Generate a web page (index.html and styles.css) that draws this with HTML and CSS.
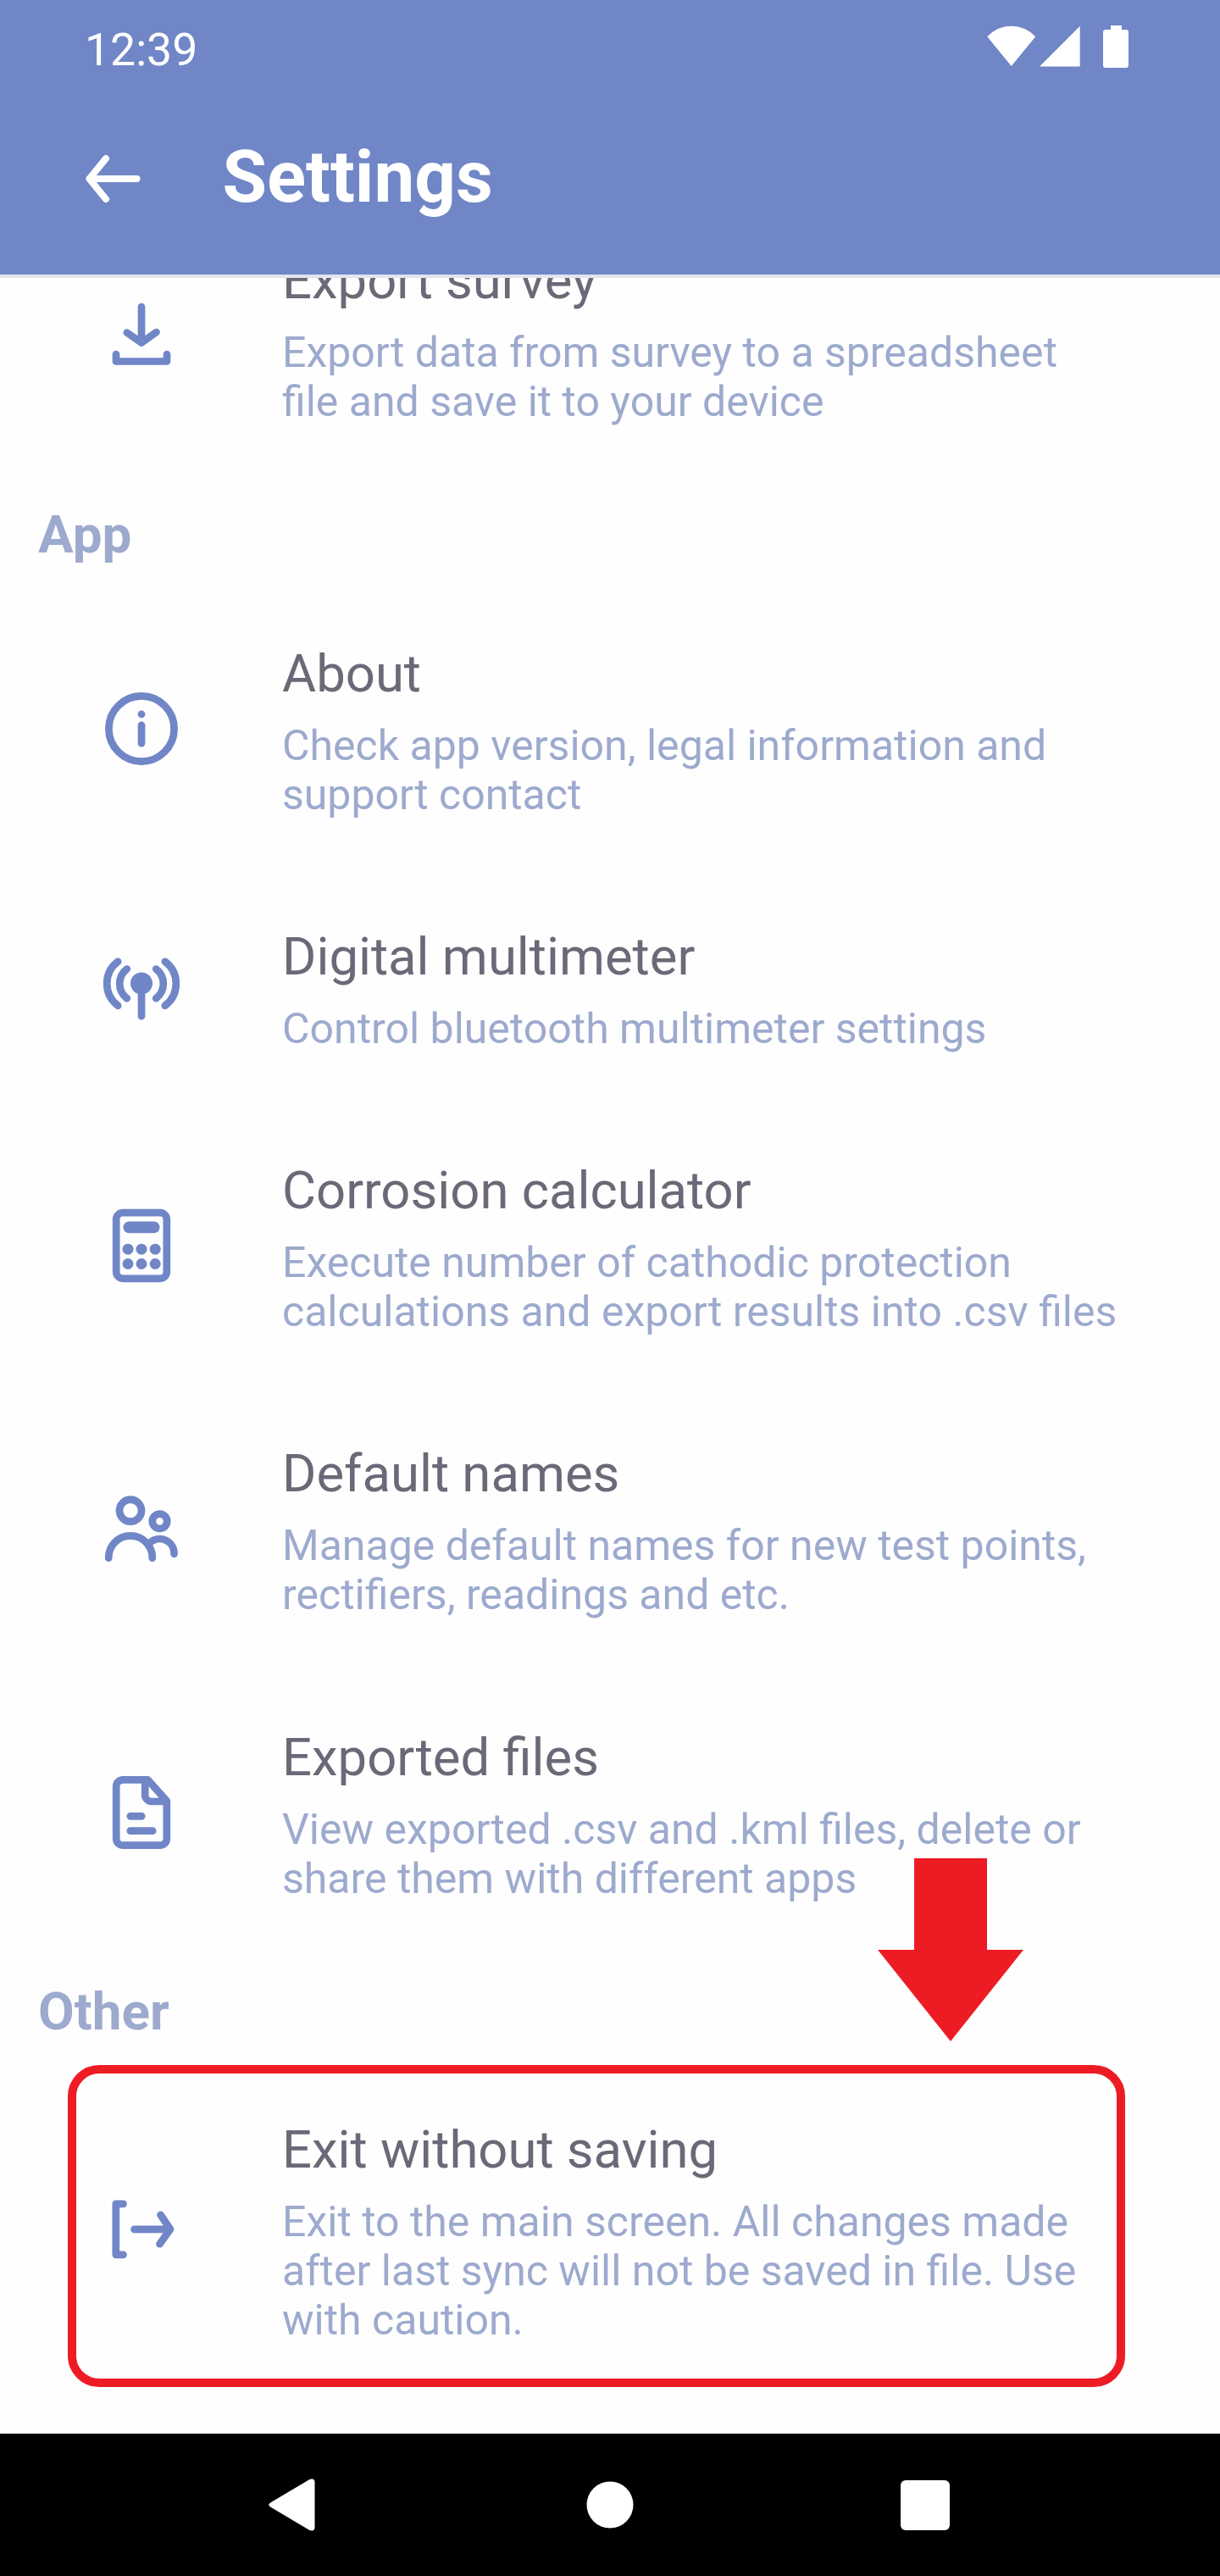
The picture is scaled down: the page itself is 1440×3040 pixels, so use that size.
FILE: index.html
```html
<!DOCTYPE html>
<html lang="en">
<head>
<meta charset="utf-8">
<title>Settings</title>
<link rel="stylesheet" href="styles.css">
</head>
<body>
<div class="screen">
  <header class="header">
    <div class="status-bar">
      <span class="clock">12:39</span>
      <div class="status-icons">
        <svg class="wifi" width="58" height="50" viewBox="0 0 58 50"><path d="M.3 13.3Q12 .8 28.7 .8T57.2 13.3L28.7 48z"/></svg>
        <svg class="signal" width="48" height="50" viewBox="0 0 48 50"><path d="M0 48.5L47.7 .8v47.7z"/></svg>
        <svg class="battery" width="30" height="50" viewBox="0 0 30 50"><path d="M9 0h13v5h5a3 3 0 0 1 3 3v39a3 3 0 0 1-3 3H3a3 3 0 0 1-3-3V8a3 3 0 0 1 3-3h6z"/></svg>
      </div>
    </div>
    <div class="toolbar">
      <svg class="back" width="66" height="58" viewBox="0 0 66 58"><path d="M60.5 29H4.500M24 5L4.500 29l19.500 24"/></svg>
      <h1 class="page-title">Settings</h1>
    </div>
  </header>

  <main class="list">
    <div class="row row-clipped">
      <svg class="icon" viewBox="0 0 104 104"><path d="M52 18v41M34.800 48.500L52 60.500l17.500-12.500M22 74v8.500h60V74"/></svg>
      <div class="text"><div class="title">Export survey</div><div class="desc">Export data from survey to a spreadsheet<br>file and save it to your device</div></div>
    </div>

    <h2 class="section">App</h2>
    <div class="row">
      <svg class="icon" viewBox="0 0 104 104"><circle cx="52" cy="52" r="38.6"/><path d="M52 47.800v21.400"/><circle class="solid" cx="52" cy="34.8" r="4.400"/></svg>
      <div class="text"><div class="title">About</div><div class="desc">Check app version, legal information and<br>support contact</div></div>
    </div>
    <div class="row row-single">
      <svg class="icon" viewBox="0 0 104 104"><circle class="solid" cx="52" cy="47.5" r="13"/><path d="M52 50v36.200M34.800 30.500a21.800 21.800 0 0 0 0 34.700M24.200 21.800a32.500 32.500 0 0 0 0 52M69.200 30.500a21.800 21.800 0 0 1 0 34.700M79.800 21.800a32.500 32.500 0 0 1 0 52"/></svg>
      <div class="text"><div class="title">Digital multimeter</div><div class="desc">Control bluetooth multimeter settings</div></div>
    </div>
    <div class="row">
      <svg class="icon" viewBox="0 0 104 104"><rect x="22.200" y="13.200" width="59.600" height="77.600" rx="7.800"/><g class="solid"><rect x="30.500" y="23.500" width="43" height="13.700" rx="6.800"/><circle cx="36" cy="56.200" r="6.500"/><circle cx="52" cy="56.200" r="6.500"/><circle cx="68.200" cy="56.200" r="6.500"/><circle cx="36" cy="73.500" r="6.500"/><circle cx="52" cy="73.500" r="6.500"/><circle cx="68.200" cy="73.500" r="6.500"/></g></svg>
      <div class="text"><div class="title">Corrosion calculator</div><div class="desc">Execute number of cathodic protection<br>calculations and export results into .csv files</div></div>
    </div>
    <div class="row">
      <svg class="icon" viewBox="0 0 104 104"><circle cx="39" cy="30.700" r="13"/><circle cx="73.500" cy="43.300" r="8.700"/><path d="M13.200 86.700v-.6a25.800 25.800 0 0 1 51.600 0v.6M62 68.600a17 17 0 0 1 28.500 13.100"/></svg>
      <div class="text"><div class="title">Default names</div><div class="desc">Manage default names for new test points,<br>rectifiers, readings and etc.</div></div>
    </div>
    <div class="row">
      <svg class="icon" viewBox="0 0 104 104"><path d="M59.500 13.300H30a7.800 7.800 0 0 0-7.800 7.800V83a7.700 7.700 0 0 0 7.800 7.700h44a7.700 7.700 0 0 0 7.800-7.700V38.500zM56.200 14v17.200a7.800 7.800 0 0 0 7.800 7.800h17.500M38.800 56.300h13.400M38.800 73.700h26.400"/></svg>
      <div class="text"><div class="title">Exported files</div><div class="desc">View exported .csv and .kml files, delete or<br>share them with different apps</div></div>
    </div>

    <h2 class="section">Other</h2>
    <div class="row row-triple">
      <svg class="icon" viewBox="0 0 104 104"><path d="M30.500 21.800h-8.700v60h8.700M43.500 51.800H85M74.500 34.800L86 51.800L73.500 69.200"/></svg>
      <div class="text"><div class="title">Exit without saving</div><div class="desc">Exit to the main screen. All changes made<br>after last sync will not be saved in file. Use<br>with caution.</div></div>
      <div class="highlight"></div>
      <svg class="pointer" width="172" height="216" viewBox="0 0 172 216"><path d="M43 0h86v108h43L86 216 0 108h43z"/></svg>
    </div>
  </main>

  <nav class="nav-bar">
    <svg width="61" height="64" viewBox="0 0 61 64"><path d="M3 29L48 2.200Q54 0 54.500 5V59Q54 64 48 61.800L3 35Q-2.500 32 3 29z"/></svg>
    <svg width="56" height="56" viewBox="0 0 56 56"><circle cx="28" cy="28" r="27.500"/></svg>
    <svg width="58" height="59" viewBox="0 0 58 59"><rect width="58" height="59" rx="6"/></svg>
  </nav>
</div>
</body>
</html>
```
FILE: styles.css
```css
* {
  box-sizing: border-box;
}

body {
  margin: 0;
  background: #fefefe;
  font-family: Roboto, "Liberation Sans", sans-serif;
}

svg {
  display: block;
  flex: none;
}

.screen {
  display: flex;
  flex-direction: column;
  width: 1440px;
  height: 3040px;
  overflow: hidden;
}

.header {
  flex: none;
  height: 328px;
  background: #7086c7;
  border-bottom: 4px solid #e2e4ee;
  color: #fff;
}

.status-bar {
  display: flex;
  justify-content: space-between;
  height: 112px;
  padding: 27px 108px 0 100px;
}

.clock {
  font-size: 53.500px;
  line-height: 63px;
}

.status-icons {
  display: flex;
  padding-top: 3px;
  fill: #fff;
}

.signal {
  margin-left: 4px;
}

.battery {
  margin-left: 27px;
}

.toolbar {
  display: flex;
  align-items: center;
  height: 198px;
  padding-left: 100.500px;
}

.back {
  fill: none;
  stroke: #fff;
  stroke-width: 8;
  stroke-linecap: round;
  stroke-linejoin: round;
}

.page-title {
  margin: 0 0 4px 96px;
  font-size: 85.300px;
  font-weight: 700;
  line-height: 98px;
}

.list {
  flex: 1;
  min-height: 0;
  overflow: hidden;
}

.row {
  position: relative;
  display: flex;
  align-items: center;
  height: 334.300px;
  padding-left: 114.500px;
}

.row-clipped {
  margin-top: -99px;
}

.row-single {
  height: 276px;
}

.row-triple {
  height: 392px;
}

.icon {
  width: 104px;
  height: 104px;
  fill: none;
  stroke: #7086c7;
  stroke-width: 8.700px;
  stroke-linecap: round;
  stroke-linejoin: round;
}

.icon .solid {
  fill: #7086c7;
  stroke: none;
}

.text {
  padding-top: 5px;
  margin-left: 114.500px;
  white-space: nowrap;
}

.title {
  font-size: 61.600px;
  line-height: 75px;
  color: #6b6977;
}

.desc {
  margin-top: 18px;
  font-size: 50px;
  line-height: 58px;
  color: #9daace;
}

.section {
  height: 129.300px;
  margin: 0;
  padding: 30px 0 0 45px;
  font-size: 62px;
  font-weight: 700;
  line-height: 75px;
  color: #9daace;
}

.highlight {
  position: absolute;
  top: 2px;
  left: 80px;
  width: 1248px;
  height: 380px;
  border: 10px solid #ed1c24;
  border-radius: 37px;
}

.pointer {
  position: absolute;
  top: -242px;
  left: 1036px;
  fill: #ed1c24;
}

.nav-bar {
  display: flex;
  flex: none;
  align-items: center;
  justify-content: space-between;
  height: 168px;
  padding: 0 319.500px 0 316.500px;
  background: #000;
  fill: #fff;
}
```
